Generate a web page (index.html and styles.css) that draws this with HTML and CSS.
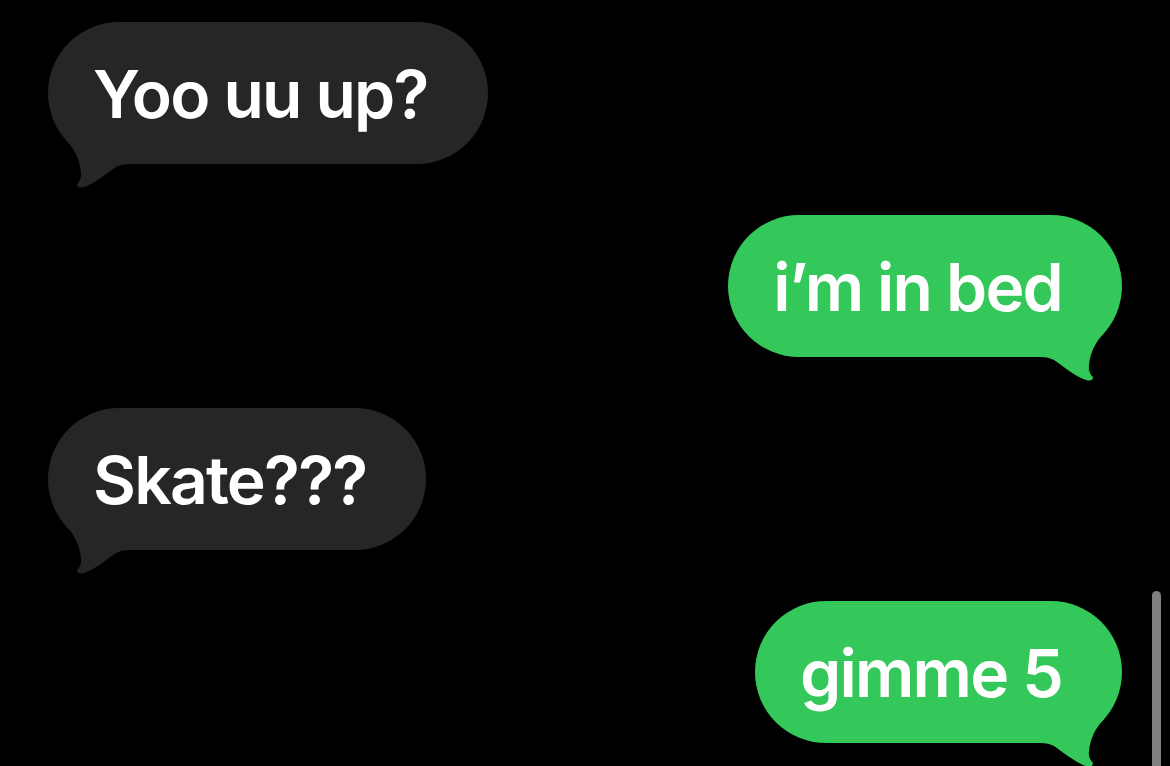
FILE: index.html
```html
<!DOCTYPE html>
<html lang="en">
<head>
<meta charset="utf-8">
<title>Messages</title>
<link rel="stylesheet" href="styles.css">
</head>
<body>
<main class="thread">
  <div class="msg in">
    <div class="bubble">
      <span class="text">Yoo uu up?</span>
      <svg class="tail" viewBox="0 0 90 62" aria-hidden="true"><path d="M18,10 C26,18 32,30 33,42 C34,48 31,52 29,54 Q29,59 36,57 C44,55 58,44 68,37 C72,35 76,34 82,34 L82,20 Z"/></svg>
    </div>
  </div>
  <div class="msg out">
    <div class="bubble">
      <span class="text">i’m in bed</span>
      <svg class="tail" viewBox="0 0 90 62" aria-hidden="true"><path d="M18,10 C26,18 32,30 33,42 C34,48 31,52 29,54 Q29,59 36,57 C44,55 58,44 68,37 C72,35 76,34 82,34 L82,20 Z"/></svg>
    </div>
  </div>
  <div class="msg in">
    <div class="bubble">
      <span class="text">Skate???</span>
      <svg class="tail" viewBox="0 0 90 62" aria-hidden="true"><path d="M18,10 C26,18 32,30 33,42 C34,48 31,52 29,54 Q29,59 36,57 C44,55 58,44 68,37 C72,35 76,34 82,34 L82,20 Z"/></svg>
    </div>
  </div>
  <div class="msg out">
    <div class="bubble">
      <span class="text">gimme 5</span>
      <svg class="tail" viewBox="0 0 90 62" aria-hidden="true"><path d="M18,10 C26,18 32,30 33,42 C34,48 31,52 29,54 Q29,59 36,57 C44,55 58,44 68,37 C72,35 76,34 82,34 L82,20 Z"/></svg>
    </div>
  </div>
</main>
<div class="scrollbar"></div>
</body>
</html>
```
FILE: styles.css
```css
html, body {
  margin: 0;
  padding: 0;
  background: #000;
}
body {
  width: 1170px;
  height: 766px;
  overflow: hidden;
  position: relative;
  font-family: "Inter", "Liberation Sans", sans-serif;
  color: #fff;
}
.thread {
  display: flex;
  flex-direction: column;
  gap: 51px;
  padding: 22px 48px 0 48px;
}
.msg {
  display: flex;
}
.msg.out {
  justify-content: flex-end;
}
.bubble {
  position: relative;
  height: 142px;
  box-sizing: border-box;
  border-radius: 71px;
  display: flex;
  align-items: center;
  padding: 0 60px 0 45px;
  font-size: 66px;
  font-weight: 600;
  letter-spacing: -1.8px;
}
.text {
  position: relative;
  z-index: 1;
  line-height: 1;
  margin-top: 2px;
}
.in .bubble {
  background: #262629;
}
.out .bubble {
  background: #34c759;
}
.tail {
  position: absolute;
  top: 108px;
  width: 90px;
  height: 62px;
}
.in .tail {
  left: 0;
  fill: #262629;
}
.out .tail {
  right: 0;
  fill: #34c759;
  transform: scaleX(-1);
}
.scrollbar {
  position: absolute;
  left: 1152px;
  top: 591px;
  width: 9px;
  height: 190px;
  border-radius: 5px;
  background: #808080;
}
```
